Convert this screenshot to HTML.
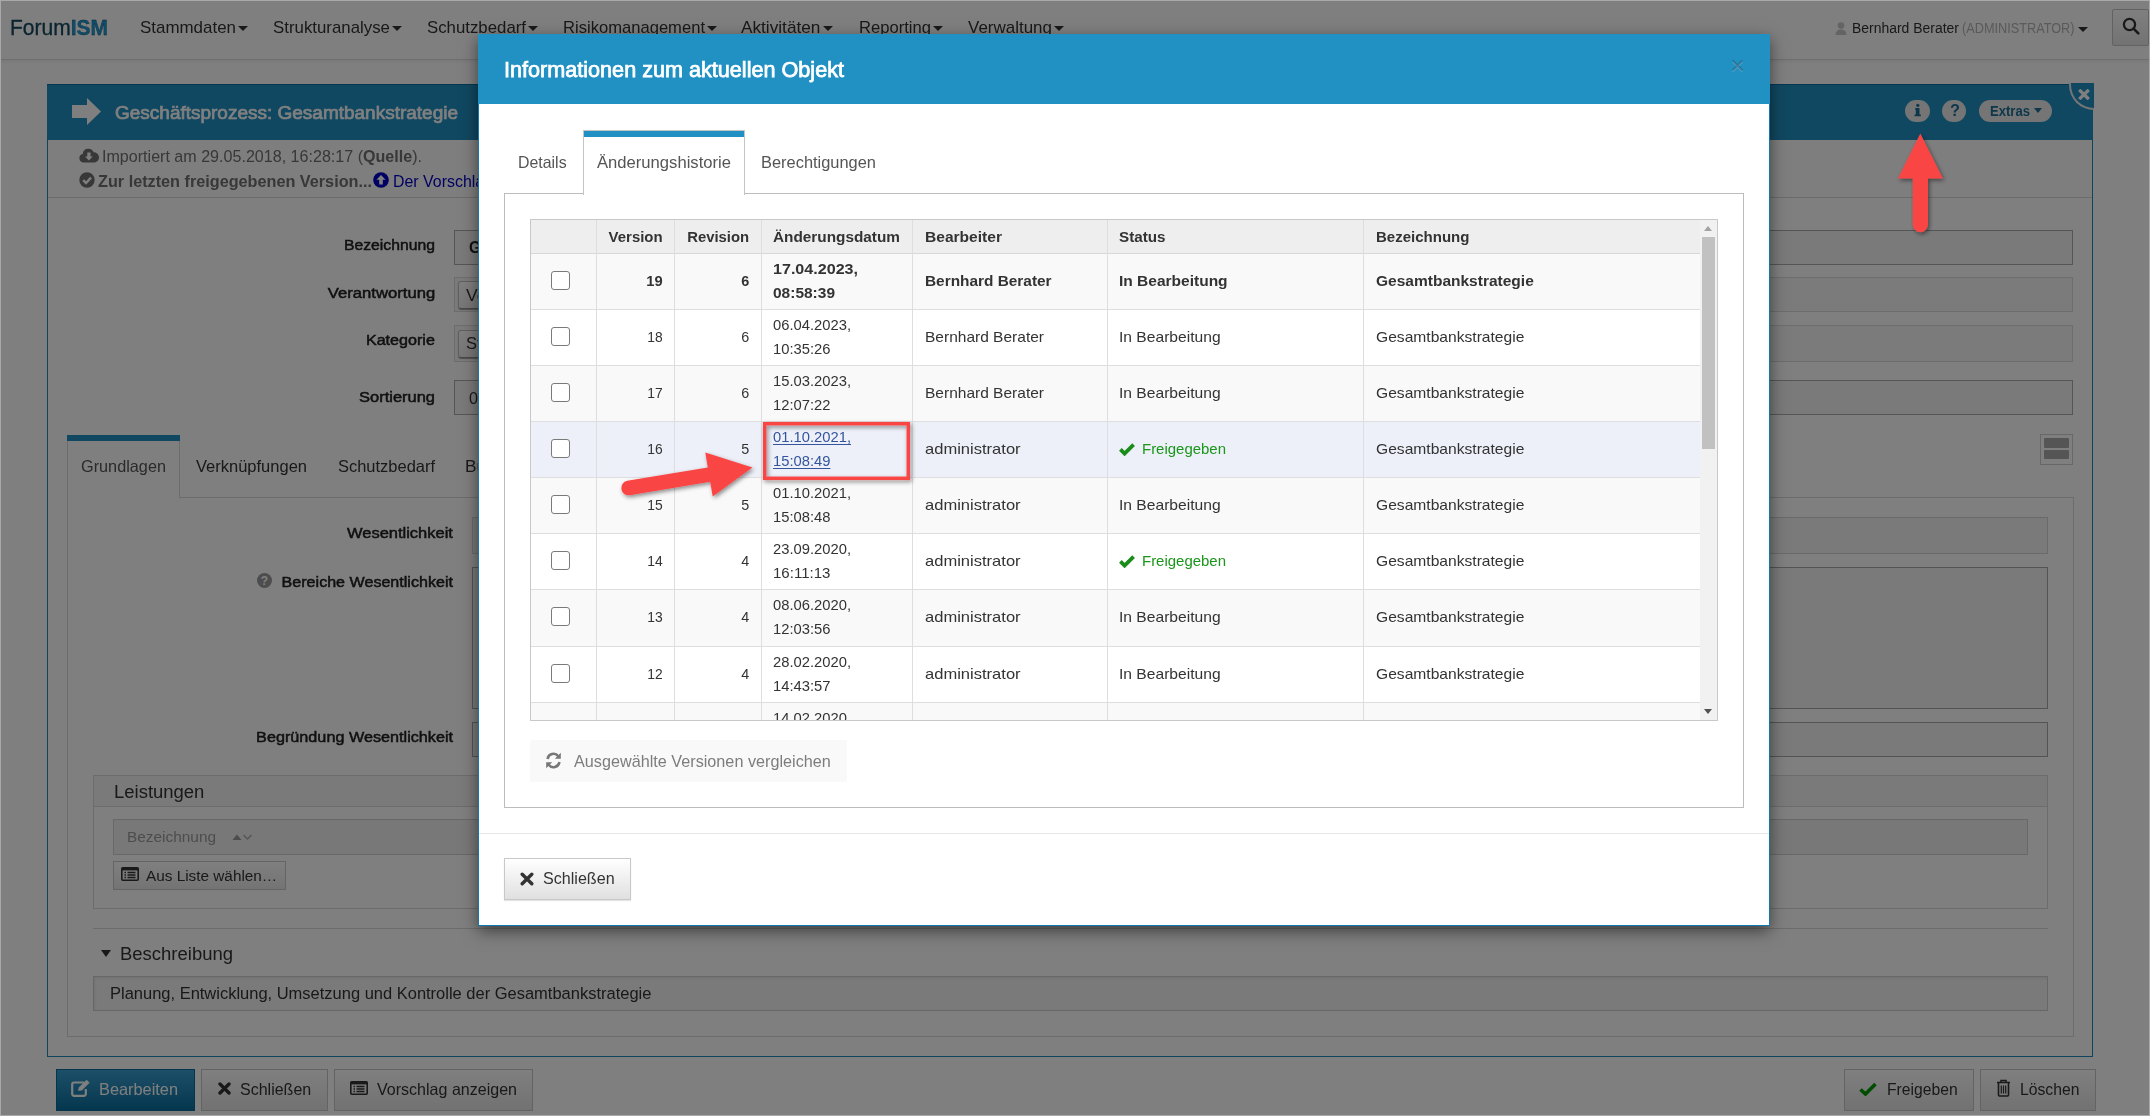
<!DOCTYPE html>
<html><head><meta charset="utf-8"><title>ForumISM - Informationen zum aktuellen Objekt</title><style>*{margin:0;padding:0}
html,body{width:2150px;height:1116px;overflow:hidden;background:#fff}
body{position:relative;font-family:"Liberation Sans",sans-serif}
.a{position:absolute}
.t{position:absolute;white-space:pre;display:block}
</style></head>
<body>
<div id="page"><div class="a" style="left:0px;top:0px;width:2150px;height:1116px;background:#fff"></div><div class="a" style="left:0px;top:0px;width:2150px;height:59px;background:#fff;border-bottom:1px solid #dcdcdc;box-shadow:0 1px 5px rgba(0,0,0,.08)"></div><span class="t" style="left:10.0px;top:18.0px;font-size:21.5px;line-height:21.5px;font-weight:400;color:#16475c;transform:scaleX(0.9765);transform-origin:left;-webkit-text-stroke:0.3px #16475c">Forum<b style="color:#1f9ad4">ISM</b></span><span class="t" style="left:139.5px;top:19.0px;font-size:17px;line-height:17px;font-weight:400;color:#333;transform:scaleX(0.9959);transform-origin:left;">Stammdaten</span><div class="a" style="left:238px;top:26px;width:0;height:0;border-left:5.0px solid transparent;border-right:5.0px solid transparent;border-top:5px solid #333"></div><span class="t" style="left:272.5px;top:19.0px;font-size:17px;line-height:17px;font-weight:400;color:#333;transform:scaleX(0.9905);transform-origin:left;">Strukturanalyse</span><div class="a" style="left:392px;top:26px;width:0;height:0;border-left:5.0px solid transparent;border-right:5.0px solid transparent;border-top:5px solid #333"></div><span class="t" style="left:426.5px;top:19.0px;font-size:17px;line-height:17px;font-weight:400;color:#333;transform:scaleX(0.9881);transform-origin:left;">Schutzbedarf</span><div class="a" style="left:528px;top:26px;width:0;height:0;border-left:5.0px solid transparent;border-right:5.0px solid transparent;border-top:5px solid #333"></div><span class="t" style="left:562.5px;top:19.0px;font-size:17px;line-height:17px;font-weight:400;color:#333;transform:scaleX(0.9758);transform-origin:left;">Risikomanagement</span><div class="a" style="left:707px;top:26px;width:0;height:0;border-left:5.0px solid transparent;border-right:5.0px solid transparent;border-top:5px solid #333"></div><span class="t" style="left:741.1px;top:19.0px;font-size:17px;line-height:17px;font-weight:400;color:#333;transform:scaleX(1.0123);transform-origin:left;">Aktivitäten</span><div class="a" style="left:823px;top:26px;width:0;height:0;border-left:5.0px solid transparent;border-right:5.0px solid transparent;border-top:5px solid #333"></div><span class="t" style="left:858.5px;top:19.0px;font-size:17px;line-height:17px;font-weight:400;color:#333;transform:scaleX(0.9767);transform-origin:left;">Reporting</span><div class="a" style="left:933px;top:26px;width:0;height:0;border-left:5.0px solid transparent;border-right:5.0px solid transparent;border-top:5px solid #333"></div><span class="t" style="left:967.5px;top:19.0px;font-size:17px;line-height:17px;font-weight:400;color:#333;transform:scaleX(0.9985);transform-origin:left;">Verwaltung</span><div class="a" style="left:1054px;top:26px;width:0;height:0;border-left:5.0px solid transparent;border-right:5.0px solid transparent;border-top:5px solid #333"></div><svg class="a" style="left:1835px;top:22px" width="12" height="13" viewBox="0 0 12 13"><circle cx="6" cy="3.6" r="3.3" fill="#c8c8c8"/><path d="M0.5 13 Q0.5 7.5 6 7.5 Q11.5 7.5 11.5 13 Z" fill="#c8c8c8"/></svg><span class="t" style="left:1851.5px;top:22.0px;font-size:13.8px;line-height:13.8px;font-weight:400;color:#333;transform:scaleX(1.0109);transform-origin:left;">Bernhard Berater</span><span class="t" style="left:1961.5px;top:22.0px;font-size:13.8px;line-height:13.8px;font-weight:400;color:#b4b4b4;transform:scaleX(0.9212);transform-origin:left;">(ADMINISTRATOR)</span><div class="a" style="left:2077.5px;top:27px;width:0;height:0;border-left:5.0px solid transparent;border-right:5.0px solid transparent;border-top:5px solid #333"></div><div class="a" style="left:2112px;top:9px;width:37px;height:37px;border:1px solid #c4c4c4;background:linear-gradient(#fff,#e6e6e6);box-sizing:border-box;border-radius:2px"></div><svg class="a" style="left:2122px;top:17px" width="18" height="18" viewBox="0 0 18 18"><circle cx="7.5" cy="7.5" r="5.6" fill="none" stroke="#333" stroke-width="2.3"/><path d="M11.6 11.6 L16.3 16.3" stroke="#333" stroke-width="2.6" stroke-linecap="round"/></svg><div class="a" style="left:47px;top:84px;width:2046px;height:973px;border:1px solid #1c88bb;box-sizing:border-box;background:#fff"></div><div class="a" style="left:47px;top:84px;width:2046px;height:56px;background:#2190c3;border-top:1px solid #0a6fa0;box-sizing:border-box"></div><svg class="a" style="left:72px;top:98px" width="30" height="27" viewBox="0 0 30 27"><path d="M0 7 H15 V0 L29 13.5 L15 27 V20 H0 Z" fill="#fff"/></svg><span class="t" style="left:115.0px;top:104.0px;font-size:18.6px;line-height:18.6px;font-weight:400;color:#fff;transform:scaleX(1.0212);transform-origin:left;-webkit-text-stroke:0.7px #fff">Geschäftsprozess: Gesamtbankstrategie</span><div class="a" style="left:1905px;top:100px;width:25px;height:22px;background:#eaeaea;border-radius:12px"></div><svg class="a" style="left:1913px;top:103px" width="10" height="15" viewBox="0 0 10 15"><circle cx="4.8" cy="2.3" r="1.6" fill="#1f6f96"/><path d="M2.2 5 H6.5 V11.4 H7.8 V13.2 H1.6 V11.4 H2.8 V6.8 H2.2 Z" fill="#1f6f96"/></svg><div class="a" style="left:1942px;top:100px;width:24px;height:22px;background:#eaeaea;border-radius:12px"></div><span class="t" style="left:1950.0px;top:103.0px;font-size:16px;line-height:16px;font-weight:700;color:#1f6f96;transform:scaleX(1.0224);transform-origin:left;">?</span><div class="a" style="left:1979px;top:100px;width:73px;height:22px;background:#eaeaea;border-radius:11px"></div><span class="t" style="left:1990.0px;top:104.0px;font-size:14.5px;line-height:14.5px;font-weight:700;color:#1f6f96;transform:scaleX(0.9020);transform-origin:left;">Extras</span><div class="a" style="left:2033.5px;top:108px;width:0;height:0;border-left:4.5px solid transparent;border-right:4.5px solid transparent;border-top:5px solid #1f6f96"></div><div class="a" style="left:2068.5px;top:83px;width:25.5px;height:27px;background:#2190c3;border-left:2px solid #eaeaea;border-bottom:2px solid #eaeaea;border-bottom-left-radius:26px;box-sizing:border-box"></div><svg class="a" style="left:2078px;top:89px" width="12" height="11" viewBox="0 0 12 11"><path d="M2.4 2 L9.6 9 M9.6 2 L2.4 9" stroke="#fff" stroke-width="3.3" stroke-linecap="square"/></svg><div class="a" style="left:48px;top:140px;width:2044px;height:58px;background:#fcfcfc;border-bottom:1px solid #d6d6d6;box-sizing:border-box"></div><svg class="a" style="left:79px;top:147px" width="20" height="16" viewBox="0 0 20 16"><path d="M4.5 15.5 A4.3 4.3 0 0 1 3.8 7 A5.6 5.6 0 0 1 14.6 5.2 A5.2 5.2 0 0 1 15.8 15.5 Z" fill="#707070"/><path d="M8.3 5.5 H11.5 V9.5 H13.8 L9.9 13.5 L6 9.5 H8.3 Z" fill="#fff"/></svg><span class="t" style="left:102.0px;top:148.5px;font-size:16.8px;line-height:16.8px;font-weight:400;color:#707070;transform:scaleX(0.9582);transform-origin:left;">Importiert am 29.05.2018, 16:28:17 (<b>Quelle</b>).</span><svg class="a" style="left:79px;top:172px" width="16" height="16" viewBox="0 0 16 16"><circle cx="8" cy="8" r="7.7" fill="#707070"/><path d="M4.2 8.2 L7 11 L12 5.6" fill="none" stroke="#fff" stroke-width="2.4"/></svg><span class="t" style="left:98.0px;top:174.0px;font-size:16.8px;line-height:16.8px;font-weight:700;color:#707070;transform:scaleX(0.9665);transform-origin:left;">Zur letzten freigegebenen Version...</span><svg class="a" style="left:373px;top:172px" width="16" height="16" viewBox="0 0 16 16"><circle cx="8" cy="8" r="7.8" fill="#0000c8"/><path d="M8 3 L12.6 7.8 H9.8 V12.5 H6.2 V7.8 H3.4 Z" fill="#fff"/></svg><span class="t" style="left:393.0px;top:174.0px;font-size:16.8px;line-height:16.8px;font-weight:400;color:#0000c8;transform:scaleX(0.9487);transform-origin:left;">Der Vorschlag</span><span class="t" style="left:346.0px;top:237.0px;font-size:15.4px;line-height:15.4px;font-weight:400;color:#222;transform:scaleX(1.0225);transform-origin:right;-webkit-text-stroke:0.5px #222">Bezeichnung</span><span class="t" style="left:335.8px;top:285.0px;font-size:15.4px;line-height:15.4px;font-weight:400;color:#222;transform:scaleX(1.0821);transform-origin:right;-webkit-text-stroke:0.5px #222">Verantwortung</span><span class="t" style="left:369.1px;top:332.0px;font-size:15.4px;line-height:15.4px;font-weight:400;color:#222;transform:scaleX(1.0472);transform-origin:right;-webkit-text-stroke:0.5px #222">Kategorie</span><span class="t" style="left:364.0px;top:389.0px;font-size:15.4px;line-height:15.4px;font-weight:400;color:#222;transform:scaleX(1.0702);transform-origin:right;-webkit-text-stroke:0.5px #222">Sortierung</span><div class="a" style="left:454px;top:230px;width:1619px;height:35px;background:#f5f5f5;border:1px solid #ababab;box-sizing:border-box"></div><span class="t" style="left:469.0px;top:239.0px;font-size:16.5px;line-height:16.5px;font-weight:700;color:#222;transform:scaleX(0.9343);transform-origin:left;">G</span><div class="a" style="left:454px;top:277px;width:1619px;height:35px;background:#f7f7f7;border:1px solid #dadada;box-sizing:border-box"></div><div class="a" style="left:458px;top:281px;width:242px;height:28px;background:linear-gradient(#fff,#eee);border:1px solid #c0c0c0;border-bottom-color:#909090;border-radius:3px;box-shadow:0 1px 1px rgba(0,0,0,.35);box-sizing:border-box"></div><span class="t" style="left:466.0px;top:287.0px;font-size:16.5px;line-height:16.5px;font-weight:400;color:#333;transform:scaleX(1.0614);transform-origin:left;">Verantwortlich</span><div class="a" style="left:454px;top:325px;width:1619px;height:37px;background:#f7f7f7;border:1px solid #dadada;box-sizing:border-box"></div><div class="a" style="left:458px;top:330px;width:242px;height:28px;background:linear-gradient(#fff,#eee);border:1px solid #c0c0c0;border-bottom-color:#909090;border-radius:3px;box-shadow:0 1px 1px rgba(0,0,0,.35);box-sizing:border-box"></div><span class="t" style="left:465.5px;top:335.0px;font-size:16.5px;line-height:16.5px;font-weight:400;color:#333;transform:scaleX(0.9993);transform-origin:left;">Strategie</span><div class="a" style="left:454px;top:380px;width:1619px;height:35px;background:#f5f5f5;border:1px solid #ababab;box-sizing:border-box"></div><span class="t" style="left:469.0px;top:390.0px;font-size:16.5px;line-height:16.5px;font-weight:400;color:#333;transform:scaleX(0.9796);transform-origin:left;">0</span><div class="a" style="left:2040px;top:434px;width:33px;height:31px;border:1px solid #d0d0d0;box-sizing:border-box;background:#fff"></div><div class="a" style="left:2044px;top:438px;width:25px;height:10px;background:#aaa;border-radius:1px"></div><div class="a" style="left:2044px;top:450px;width:25px;height:9px;background:#aaa;border-radius:1px"></div><div class="a" style="left:67px;top:497px;width:2007px;height:540px;border:1px solid #d8d8d8;box-sizing:border-box;background:#fff"></div><div class="a" style="left:67px;top:435px;width:113px;height:63px;background:#fff;border-left:1px solid #d8d8d8;border-right:1px solid #d8d8d8;box-sizing:border-box"></div><div class="a" style="left:67px;top:435px;width:113px;height:6px;background:#2190c3"></div><span class="t" style="left:81.0px;top:458.0px;font-size:16.5px;line-height:16.5px;font-weight:400;color:#555;transform:scaleX(0.9857);transform-origin:left;">Grundlagen</span><span class="t" style="left:196.0px;top:458.0px;font-size:16.5px;line-height:16.5px;font-weight:400;color:#333;transform:scaleX(0.9999);transform-origin:left;">Verknüpfungen</span><span class="t" style="left:338.0px;top:458.0px;font-size:16.5px;line-height:16.5px;font-weight:400;color:#333;transform:scaleX(0.9976);transform-origin:left;">Schutzbedarf</span><span class="t" style="left:465.0px;top:458.0px;font-size:16.5px;line-height:16.5px;font-weight:400;color:#333;transform:scaleX(1.0455);transform-origin:left;">Business</span><span class="t" style="left:354.0px;top:525.0px;font-size:15.4px;line-height:15.4px;font-weight:400;color:#222;transform:scaleX(1.0712);transform-origin:right;-webkit-text-stroke:0.5px #222">Wesentlichkeit</span><div class="a" style="left:472px;top:517px;width:1576px;height:37px;background:#f5f5f5;border:1px solid #d4d4d4;box-sizing:border-box"></div><svg class="a" style="left:257px;top:573px" width="15" height="15" viewBox="0 0 15 15"><circle cx="7.5" cy="7.5" r="7.5" fill="#9a9a9a"/><text x="7.5" y="12" text-anchor="middle" font-family="Liberation Sans" font-weight="bold" font-size="12" fill="#fff">?</text></svg><span class="t" style="left:289.0px;top:574.0px;font-size:15.4px;line-height:15.4px;font-weight:400;color:#222;transform:scaleX(1.0453);transform-origin:right;-webkit-text-stroke:0.5px #222">Bereiche Wesentlichkeit</span><div class="a" style="left:472px;top:567px;width:1576px;height:142px;background:#f5f5f5;border:1px solid #a8a8a8;box-sizing:border-box"></div><span class="t" style="left:265.9px;top:729.0px;font-size:15.4px;line-height:15.4px;font-weight:400;color:#222;transform:scaleX(1.0529);transform-origin:right;-webkit-text-stroke:0.5px #222">Begründung Wesentlichkeit</span><div class="a" style="left:472px;top:722px;width:1576px;height:35px;background:#f5f5f5;border:1px solid #a8a8a8;box-sizing:border-box"></div><div class="a" style="left:93px;top:775px;width:1955px;height:134px;border:1px solid #d8d8d8;box-sizing:border-box;background:#fff"></div><div class="a" style="left:94px;top:776px;width:1953px;height:31px;background:#f5f5f5;border-bottom:1px solid #d8d8d8;box-sizing:border-box"></div><span class="t" style="left:113.6px;top:783.0px;font-size:18.3px;line-height:18.3px;font-weight:400;color:#333;transform:scaleX(1.0106);transform-origin:left;">Leistungen</span><div class="a" style="left:113px;top:819px;width:1915px;height:36px;background:#f0f0f0;border:1px solid #d0d0d0;box-sizing:border-box"></div><span class="t" style="left:127.0px;top:828.8px;font-size:15.5px;line-height:15.5px;font-weight:400;color:#9a9a9a;transform:scaleX(0.9930);transform-origin:left;">Bezeichnung</span><svg class="a" style="left:232px;top:831.5px" width="21" height="9" viewBox="0 0 21 9"><path d="M0.5 8 L5 2.5 L9.5 8 Z" fill="#999"/><path d="M11.5 3 L15.5 7 L19.5 3" fill="none" stroke="#aaa" stroke-width="1.3"/></svg><div class="a" style="left:113px;top:861px;width:173px;height:29px;background:linear-gradient(#fff,#e8e8e8);border:1px solid #c8c8c8;box-sizing:border-box"></div><svg class="a" style="left:121px;top:867px" width="18" height="14" viewBox="0 0 18 14"><rect x="0.8" y="0.8" width="16.4" height="12.4" rx="1" fill="none" stroke="#333" stroke-width="1.6"/><rect x="0.8" y="0.8" width="16.4" height="2.6" fill="#333"/><path d="M3.5 5.5 H5 M3.5 8 H5 M3.5 10.5 H5 M6.5 5.5 H14.5 M6.5 8 H14.5 M6.5 10.5 H14.5" stroke="#333" stroke-width="1.3"/></svg><span class="t" style="left:146.4px;top:868.0px;font-size:15.5px;line-height:15.5px;font-weight:400;color:#333;transform:scaleX(0.9888);transform-origin:left;">Aus Liste wählen…</span><div class="a" style="left:93px;top:928px;width:1955px;height:1px;background:#d8d8d8"></div><div class="a" style="left:100.5px;top:950px;width:0;height:0;border-left:5.75px solid transparent;border-right:5.75px solid transparent;border-top:7.4px solid #333"></div><span class="t" style="left:120.0px;top:945.0px;font-size:18.3px;line-height:18.3px;font-weight:400;color:#333;transform:scaleX(1.0108);transform-origin:left;">Beschreibung</span><div class="a" style="left:93px;top:976px;width:1955px;height:35px;background:#f5f5f5;border:1px solid #cfcfcf;box-sizing:border-box;box-shadow:inset 1px 1px 3px rgba(0,0,0,.08)"></div><span class="t" style="left:109.6px;top:986.0px;font-size:16.8px;line-height:16.8px;font-weight:400;color:#333;transform:scaleX(0.9820);transform-origin:left;">Planung, Entwicklung, Umsetzung und Kontrolle der Gesamtbankstrategie</span><div class="a" style="left:56px;top:1069px;width:139px;height:42px;background:linear-gradient(#3aa0d0,#0a6d9e);border:1px solid #0b6a98;box-sizing:border-box"></div><svg class="a" style="left:71px;top:1079px" width="20" height="18" viewBox="0 0 20 18"><path d="M13 3.5 H3 A1.8 1.8 0 0 0 1.2 5.3 V15 A1.8 1.8 0 0 0 3 16.8 H13 A1.8 1.8 0 0 0 14.8 15 V10" fill="none" stroke="#fff" stroke-width="2.2"/><path d="M7 11.8 L7.8 8.6 L15.6 0.8 L18.6 3.8 L10.8 11.6 Z" fill="#fff"/></svg><span class="t" style="left:99.0px;top:1081.0px;font-size:16.5px;line-height:16.5px;font-weight:400;color:#fff;transform:scaleX(0.9898);transform-origin:left;">Bearbeiten</span><div class="a" style="left:201px;top:1069px;width:127px;height:42px;background:linear-gradient(#fff,#e4e4e4);border:1px solid #c6c6c6;box-sizing:border-box"></div><span class="t" style="left:240.4px;top:1081.0px;font-size:16.5px;line-height:16.5px;font-weight:400;color:#333;transform:scaleX(0.9704);transform-origin:left;">Schließen</span><div class="a" style="left:334px;top:1069px;width:199px;height:42px;background:linear-gradient(#fff,#e4e4e4);border:1px solid #c6c6c6;box-sizing:border-box"></div><span class="t" style="left:377.0px;top:1081.0px;font-size:16.5px;line-height:16.5px;font-weight:400;color:#333;transform:scaleX(0.9720);transform-origin:left;">Vorschlag anzeigen</span><div class="a" style="left:1843.5px;top:1069px;width:130.5px;height:42px;background:linear-gradient(#fff,#e4e4e4);border:1px solid #c6c6c6;box-sizing:border-box"></div><span class="t" style="left:1887.0px;top:1081.0px;font-size:16.5px;line-height:16.5px;font-weight:400;color:#333;transform:scaleX(0.9514);transform-origin:left;">Freigeben</span><div class="a" style="left:1980px;top:1069px;width:116px;height:42px;background:linear-gradient(#fff,#e4e4e4);border:1px solid #c6c6c6;box-sizing:border-box"></div><span class="t" style="left:2020.0px;top:1081.0px;font-size:16.5px;line-height:16.5px;font-weight:400;color:#333;transform:scaleX(0.9537);transform-origin:left;">Löschen</span><svg class="a" style="left:218px;top:1082px" width="13" height="13" viewBox="0 0 13 13"><path d="M2 2 L11 11 M11 2 L2 11" stroke="#333" stroke-width="3.4" stroke-linecap="round"/></svg><svg class="a" style="left:350px;top:1081px" width="18" height="14" viewBox="0 0 18 14"><rect x="0.8" y="0.8" width="16.4" height="12.4" rx="1" fill="none" stroke="#333" stroke-width="1.6"/><rect x="0.8" y="0.8" width="16.4" height="2.6" fill="#333"/><path d="M3.5 5.5 H5 M3.5 8 H5 M3.5 10.5 H5 M6.5 5.5 H14.5 M6.5 8 H14.5 M6.5 10.5 H14.5" stroke="#333" stroke-width="1.3"/></svg><svg class="a" style="left:1859px;top:1082px" width="18" height="14" viewBox="0 0 18 14"><path d="M1.5 7.5 L6.5 12 L16.5 2" fill="none" stroke="#090" stroke-width="3.6"/></svg><svg class="a" style="left:1996px;top:1079px" width="15" height="18" viewBox="0 0 15 18"><path d="M1 3.5 H14 M5 3.5 V1.5 H10 V3.5" fill="none" stroke="#333" stroke-width="1.5"/><path d="M2.5 4 V16 A1 1 0 0 0 3.5 17 H11.5 A1 1 0 0 0 12.5 16 V4" fill="none" stroke="#333" stroke-width="1.6"/><path d="M5.3 6.5 V14.5 M7.5 6.5 V14.5 M9.7 6.5 V14.5" stroke="#333" stroke-width="1.2"/></svg></div>
<div class="a" style="left:0;top:0;width:2150px;height:1116px;background:rgba(0,0,0,.5)"></div>
<div id="modal"><div class="a" style="left:478px;top:34px;width:1292px;height:892px;background:#fff;border:1px solid #1277ad;box-sizing:border-box;box-shadow:0 5px 15px rgba(0,0,0,.5)"></div><div class="a" style="left:478px;top:34px;width:1292px;height:70px;background:#2190c3"></div><span class="t" style="left:504.4px;top:59.8px;font-size:21.4px;line-height:21.4px;font-weight:400;color:#fff;transform:scaleX(1.0104);transform-origin:left;-webkit-text-stroke:0.75px #fff">Informationen zum aktuellen Objekt</span><svg class="a" style="left:1731px;top:59px" width="13" height="14" viewBox="0 0 13 14"><path d="M1.5 2.5 L11.5 12.5 M11.5 2.5 L1.5 12.5" stroke="#fff" stroke-opacity="0.2" stroke-width="2"/><path d="M1.5 1.5 L11.5 11.5 M11.5 1.5 L1.5 11.5" stroke="#000" stroke-opacity="0.22" stroke-width="2"/></svg><div class="a" style="left:504px;top:193px;width:1240px;height:615px;border:1px solid #bcbcbc;box-sizing:border-box"></div><div class="a" style="left:583px;top:130px;width:162px;height:65px;background:#fff;border:1px solid #c4c4c4;border-bottom:none;box-sizing:border-box"></div><div class="a" style="left:584px;top:131px;width:160px;height:6px;background:#2190c3"></div><span class="t" style="left:518.4px;top:154.0px;font-size:16.5px;line-height:16.5px;font-weight:400;color:#555;transform:scaleX(0.9636);transform-origin:left;">Details</span><span class="t" style="left:597.0px;top:154.0px;font-size:16.5px;line-height:16.5px;font-weight:400;color:#555;transform:scaleX(1.0075);transform-origin:left;">Änderungshistorie</span><span class="t" style="left:761.0px;top:154.0px;font-size:16.5px;line-height:16.5px;font-weight:400;color:#555;transform:scaleX(0.9949);transform-origin:left;">Berechtigungen</span><div class="a" style="left:530px;top:219px;width:1188px;height:502px;border:1px solid #c8c8c8;box-sizing:border-box;overflow:hidden"><div class="a" style="left:0px;top:0px;width:1169px;height:34px;background:#eee;border-bottom:1px solid #d8d8d8;box-sizing:border-box"></div><div class="a" style="left:0px;top:34px;width:1169px;height:56px;background:#f9f9f9;border-bottom:1px solid #dedede;box-sizing:border-box"></div><div class="a" style="left:0px;top:90px;width:1169px;height:56px;background:#fff;border-bottom:1px solid #dedede;box-sizing:border-box"></div><div class="a" style="left:0px;top:146px;width:1169px;height:56px;background:#f9f9f9;border-bottom:1px solid #dedede;box-sizing:border-box"></div><div class="a" style="left:0px;top:202px;width:1169px;height:56px;background:#edf0f9;border-bottom:1px solid #dedede;box-sizing:border-box"></div><div class="a" style="left:0px;top:258px;width:1169px;height:56px;background:#f9f9f9;border-bottom:1px solid #dedede;box-sizing:border-box"></div><div class="a" style="left:0px;top:314px;width:1169px;height:56px;background:#fff;border-bottom:1px solid #dedede;box-sizing:border-box"></div><div class="a" style="left:0px;top:370px;width:1169px;height:57px;background:#f9f9f9;border-bottom:1px solid #dedede;box-sizing:border-box"></div><div class="a" style="left:0px;top:427px;width:1169px;height:56px;background:#fff;border-bottom:1px solid #dedede;box-sizing:border-box"></div><div class="a" style="left:0px;top:483px;width:1169px;height:56px;background:#f9f9f9;border-bottom:1px solid #dedede;box-sizing:border-box"></div><div class="a" style="left:65.0px;top:0px;width:1.0px;height:501px;background:#dedede"></div><div class="a" style="left:143.0px;top:0px;width:1.0px;height:501px;background:#dedede"></div><div class="a" style="left:230.0px;top:0px;width:1.0px;height:501px;background:#dedede"></div><div class="a" style="left:381.0px;top:0px;width:1.0px;height:501px;background:#dedede"></div><div class="a" style="left:576.0px;top:0px;width:1.0px;height:501px;background:#dedede"></div><div class="a" style="left:832.0px;top:0px;width:1.0px;height:501px;background:#dedede"></div><div class="a" style="left:1169px;top:0px;width:17px;height:500px;background:#f1f1f1"></div><div class="a" style="left:1171px;top:17px;width:13px;height:212px;background:#c1c1c1"></div><div class="a" style="left:1173px;top:6px;width:0;height:0;border-left:4.5px solid transparent;border-right:4.5px solid transparent;border-bottom:5px solid #a3a3a3"></div><div class="a" style="left:1173px;top:489px;width:0;height:0;border-left:4.5px solid transparent;border-right:4.5px solid transparent;border-top:5px solid #505050"></div><span class="t" style="left:75.8px;top:9.4px;font-size:15.4px;line-height:15.4px;font-weight:700;color:#333;transform:scaleX(0.9711);transform-origin:right;">Version</span><span class="t" style="left:153.8px;top:9.4px;font-size:15.4px;line-height:15.4px;font-weight:700;color:#333;transform:scaleX(0.9664);transform-origin:right;">Revision</span><span class="t" style="left:242.0px;top:9.4px;font-size:15.4px;line-height:15.4px;font-weight:700;color:#333;transform:scaleX(0.9968);transform-origin:left;">Änderungsdatum</span><span class="t" style="left:394.0px;top:9.4px;font-size:15.4px;line-height:15.4px;font-weight:700;color:#333;transform:scaleX(1.0113);transform-origin:left;">Bearbeiter</span><span class="t" style="left:588.4px;top:9.4px;font-size:15.4px;line-height:15.4px;font-weight:700;color:#333;transform:scaleX(0.9905);transform-origin:left;">Status</span><span class="t" style="left:844.6px;top:9.4px;font-size:15.4px;line-height:15.4px;font-weight:700;color:#333;transform:scaleX(0.9751);transform-origin:left;">Bezeichnung</span><div class="a" style="left:20px;top:51.0px;width:18.600000000000023px;height:18.600000000000023px;border:1.3px solid #7a7a7a;border-radius:3px;background:#fff;box-sizing:border-box"></div><span class="t" style="left:114.7px;top:53.2px;font-size:15px;line-height:15px;font-weight:700;color:#333;transform:scaleX(0.9828);transform-origin:right;">19</span><span class="t" style="left:209.7px;top:53.2px;font-size:15px;line-height:15px;font-weight:700;color:#333;transform:scaleX(0.9588);transform-origin:right;">6</span><span class="t" style="left:242.0px;top:41.0px;font-size:15px;line-height:15px;font-weight:700;color:#333;transform:scaleX(1.0726);transform-origin:left;">17.04.2023,</span><span class="t" style="left:242.0px;top:64.6px;font-size:15px;line-height:15px;font-weight:700;color:#333;transform:scaleX(1.0325);transform-origin:left;">08:58:39</span><span class="t" style="left:394.0px;top:53.2px;font-size:15px;line-height:15px;font-weight:700;color:#333;transform:scaleX(1.0260);transform-origin:left;">Bernhard Berater</span><span class="t" style="left:588.4px;top:53.2px;font-size:15px;line-height:15px;font-weight:700;color:#333;transform:scaleX(1.0341);transform-origin:left;">In Bearbeitung</span><span class="t" style="left:844.6px;top:53.2px;font-size:15px;line-height:15px;font-weight:700;color:#333;transform:scaleX(1.0342);transform-origin:left;">Gesamtbankstrategie</span><div class="a" style="left:20px;top:107.0px;width:18.600000000000023px;height:18.600000000000023px;border:1.3px solid #7a7a7a;border-radius:3px;background:#fff;box-sizing:border-box"></div><span class="t" style="left:114.7px;top:109.2px;font-size:15px;line-height:15px;font-weight:400;color:#333;transform:scaleX(0.9228);transform-origin:right;">18</span><span class="t" style="left:209.7px;top:109.2px;font-size:15px;line-height:15px;font-weight:400;color:#333;transform:scaleX(0.9588);transform-origin:right;">6</span><span class="t" style="left:242.0px;top:97.0px;font-size:15px;line-height:15px;font-weight:400;color:#333;transform:scaleX(0.9842);transform-origin:left;">06.04.2023,</span><span class="t" style="left:242.0px;top:120.6px;font-size:15px;line-height:15px;font-weight:400;color:#333;transform:scaleX(0.9830);transform-origin:left;">10:35:26</span><span class="t" style="left:394.0px;top:109.2px;font-size:15px;line-height:15px;font-weight:400;color:#333;transform:scaleX(1.0341);transform-origin:left;">Bernhard Berater</span><span class="t" style="left:588.4px;top:109.2px;font-size:15px;line-height:15px;font-weight:400;color:#333;transform:scaleX(1.0412);transform-origin:left;">In Bearbeitung</span><span class="t" style="left:844.6px;top:109.2px;font-size:15px;line-height:15px;font-weight:400;color:#333;transform:scaleX(1.0408);transform-origin:left;">Gesamtbankstrategie</span><div class="a" style="left:20px;top:163.0px;width:18.600000000000023px;height:18.600000000000023px;border:1.3px solid #7a7a7a;border-radius:3px;background:#fff;box-sizing:border-box"></div><span class="t" style="left:114.7px;top:165.2px;font-size:15px;line-height:15px;font-weight:400;color:#333;transform:scaleX(0.9228);transform-origin:right;">17</span><span class="t" style="left:209.7px;top:165.2px;font-size:15px;line-height:15px;font-weight:400;color:#333;transform:scaleX(0.9588);transform-origin:right;">6</span><span class="t" style="left:242.0px;top:153.0px;font-size:15px;line-height:15px;font-weight:400;color:#333;transform:scaleX(0.9842);transform-origin:left;">15.03.2023,</span><span class="t" style="left:242.0px;top:176.6px;font-size:15px;line-height:15px;font-weight:400;color:#333;transform:scaleX(0.9830);transform-origin:left;">12:07:22</span><span class="t" style="left:394.0px;top:165.2px;font-size:15px;line-height:15px;font-weight:400;color:#333;transform:scaleX(1.0341);transform-origin:left;">Bernhard Berater</span><span class="t" style="left:588.4px;top:165.2px;font-size:15px;line-height:15px;font-weight:400;color:#333;transform:scaleX(1.0412);transform-origin:left;">In Bearbeitung</span><span class="t" style="left:844.6px;top:165.2px;font-size:15px;line-height:15px;font-weight:400;color:#333;transform:scaleX(1.0408);transform-origin:left;">Gesamtbankstrategie</span><div class="a" style="left:20px;top:219.0px;width:18.600000000000023px;height:18.600000000000023px;border:1.3px solid #7a7a7a;border-radius:3px;background:#fff;box-sizing:border-box"></div><span class="t" style="left:114.7px;top:221.2px;font-size:15px;line-height:15px;font-weight:400;color:#333;transform:scaleX(0.9228);transform-origin:right;">16</span><span class="t" style="left:209.7px;top:221.2px;font-size:15px;line-height:15px;font-weight:400;color:#333;transform:scaleX(0.9588);transform-origin:right;">5</span><span class="t" style="left:242.0px;top:209.0px;font-size:15px;line-height:15px;font-weight:400;color:#34559d;transform:scaleX(0.9842);transform-origin:left;text-decoration:underline;text-decoration-thickness:1px;text-underline-offset:2px">01.10.2021,</span><span class="t" style="left:242.0px;top:232.6px;font-size:15px;line-height:15px;font-weight:400;color:#34559d;transform:scaleX(0.9830);transform-origin:left;text-decoration:underline;text-decoration-thickness:1px;text-underline-offset:2px">15:08:49</span><span class="t" style="left:394.0px;top:221.2px;font-size:15px;line-height:15px;font-weight:400;color:#333;transform:scaleX(1.1026);transform-origin:left;">administrator</span><svg class="a" style="left:588px;top:223.10000000000002px" width="16" height="13" viewBox="0 0 16 13"><path d="M1.4 6.4 L5.6 10.6 L14.6 1.6" fill="none" stroke="#1a8c1a" stroke-width="3.8"/></svg><span class="t" style="left:611.4px;top:221.2px;font-size:15px;line-height:15px;font-weight:400;color:#1a961a;transform:scaleX(0.9972);transform-origin:left;">Freigegeben</span><span class="t" style="left:844.6px;top:221.2px;font-size:15px;line-height:15px;font-weight:400;color:#333;transform:scaleX(1.0408);transform-origin:left;">Gesamtbankstrategie</span><div class="a" style="left:20px;top:275.0px;width:18.600000000000023px;height:18.600000000000023px;border:1.3px solid #7a7a7a;border-radius:3px;background:#fff;box-sizing:border-box"></div><span class="t" style="left:114.7px;top:277.2px;font-size:15px;line-height:15px;font-weight:400;color:#333;transform:scaleX(0.9228);transform-origin:right;">15</span><span class="t" style="left:209.7px;top:277.2px;font-size:15px;line-height:15px;font-weight:400;color:#333;transform:scaleX(0.9588);transform-origin:right;">5</span><span class="t" style="left:242.0px;top:265.0px;font-size:15px;line-height:15px;font-weight:400;color:#333;transform:scaleX(0.9842);transform-origin:left;">01.10.2021,</span><span class="t" style="left:242.0px;top:288.6px;font-size:15px;line-height:15px;font-weight:400;color:#333;transform:scaleX(0.9830);transform-origin:left;">15:08:48</span><span class="t" style="left:394.0px;top:277.2px;font-size:15px;line-height:15px;font-weight:400;color:#333;transform:scaleX(1.1026);transform-origin:left;">administrator</span><span class="t" style="left:588.4px;top:277.2px;font-size:15px;line-height:15px;font-weight:400;color:#333;transform:scaleX(1.0412);transform-origin:left;">In Bearbeitung</span><span class="t" style="left:844.6px;top:277.2px;font-size:15px;line-height:15px;font-weight:400;color:#333;transform:scaleX(1.0408);transform-origin:left;">Gesamtbankstrategie</span><div class="a" style="left:20px;top:331.0px;width:18.600000000000023px;height:18.600000000000023px;border:1.3px solid #7a7a7a;border-radius:3px;background:#fff;box-sizing:border-box"></div><span class="t" style="left:114.7px;top:333.2px;font-size:15px;line-height:15px;font-weight:400;color:#333;transform:scaleX(0.9228);transform-origin:right;">14</span><span class="t" style="left:209.7px;top:333.2px;font-size:15px;line-height:15px;font-weight:400;color:#333;transform:scaleX(0.9588);transform-origin:right;">4</span><span class="t" style="left:242.0px;top:321.0px;font-size:15px;line-height:15px;font-weight:400;color:#333;transform:scaleX(0.9842);transform-origin:left;">23.09.2020,</span><span class="t" style="left:242.0px;top:344.6px;font-size:15px;line-height:15px;font-weight:400;color:#333;transform:scaleX(1.0021);transform-origin:left;">16:11:13</span><span class="t" style="left:394.0px;top:333.2px;font-size:15px;line-height:15px;font-weight:400;color:#333;transform:scaleX(1.1026);transform-origin:left;">administrator</span><svg class="a" style="left:588px;top:335.1px" width="16" height="13" viewBox="0 0 16 13"><path d="M1.4 6.4 L5.6 10.6 L14.6 1.6" fill="none" stroke="#1a8c1a" stroke-width="3.8"/></svg><span class="t" style="left:611.4px;top:333.2px;font-size:15px;line-height:15px;font-weight:400;color:#1a961a;transform:scaleX(0.9972);transform-origin:left;">Freigegeben</span><span class="t" style="left:844.6px;top:333.2px;font-size:15px;line-height:15px;font-weight:400;color:#333;transform:scaleX(1.0408);transform-origin:left;">Gesamtbankstrategie</span><div class="a" style="left:20px;top:387.0px;width:18.600000000000023px;height:18.600000000000023px;border:1.3px solid #7a7a7a;border-radius:3px;background:#fff;box-sizing:border-box"></div><span class="t" style="left:114.7px;top:389.2px;font-size:15px;line-height:15px;font-weight:400;color:#333;transform:scaleX(0.9228);transform-origin:right;">13</span><span class="t" style="left:209.7px;top:389.2px;font-size:15px;line-height:15px;font-weight:400;color:#333;transform:scaleX(0.9588);transform-origin:right;">4</span><span class="t" style="left:242.0px;top:377.0px;font-size:15px;line-height:15px;font-weight:400;color:#333;transform:scaleX(0.9842);transform-origin:left;">08.06.2020,</span><span class="t" style="left:242.0px;top:400.6px;font-size:15px;line-height:15px;font-weight:400;color:#333;transform:scaleX(0.9830);transform-origin:left;">12:03:56</span><span class="t" style="left:394.0px;top:389.2px;font-size:15px;line-height:15px;font-weight:400;color:#333;transform:scaleX(1.1026);transform-origin:left;">administrator</span><span class="t" style="left:588.4px;top:389.2px;font-size:15px;line-height:15px;font-weight:400;color:#333;transform:scaleX(1.0412);transform-origin:left;">In Bearbeitung</span><span class="t" style="left:844.6px;top:389.2px;font-size:15px;line-height:15px;font-weight:400;color:#333;transform:scaleX(1.0408);transform-origin:left;">Gesamtbankstrategie</span><div class="a" style="left:20px;top:444.0px;width:18.600000000000023px;height:18.600000000000023px;border:1.3px solid #7a7a7a;border-radius:3px;background:#fff;box-sizing:border-box"></div><span class="t" style="left:114.7px;top:446.2px;font-size:15px;line-height:15px;font-weight:400;color:#333;transform:scaleX(0.9228);transform-origin:right;">12</span><span class="t" style="left:209.7px;top:446.2px;font-size:15px;line-height:15px;font-weight:400;color:#333;transform:scaleX(0.9588);transform-origin:right;">4</span><span class="t" style="left:242.0px;top:434.0px;font-size:15px;line-height:15px;font-weight:400;color:#333;transform:scaleX(0.9842);transform-origin:left;">28.02.2020,</span><span class="t" style="left:242.0px;top:457.6px;font-size:15px;line-height:15px;font-weight:400;color:#333;transform:scaleX(0.9830);transform-origin:left;">14:43:57</span><span class="t" style="left:394.0px;top:446.2px;font-size:15px;line-height:15px;font-weight:400;color:#333;transform:scaleX(1.1026);transform-origin:left;">administrator</span><span class="t" style="left:588.4px;top:446.2px;font-size:15px;line-height:15px;font-weight:400;color:#333;transform:scaleX(1.0412);transform-origin:left;">In Bearbeitung</span><span class="t" style="left:844.6px;top:446.2px;font-size:15px;line-height:15px;font-weight:400;color:#333;transform:scaleX(1.0408);transform-origin:left;">Gesamtbankstrategie</span><div class="a" style="left:20px;top:500.0px;width:18.600000000000023px;height:18.600000000000023px;border:1.3px solid #7a7a7a;border-radius:3px;background:#fff;box-sizing:border-box"></div><span class="t" style="left:115.8px;top:502.2px;font-size:15px;line-height:15px;font-weight:400;color:#333;transform:scaleX(0.9886);transform-origin:right;">11</span><span class="t" style="left:209.7px;top:502.2px;font-size:15px;line-height:15px;font-weight:400;color:#333;transform:scaleX(0.9588);transform-origin:right;">4</span><span class="t" style="left:242.0px;top:490.0px;font-size:15px;line-height:15px;font-weight:400;color:#333;transform:scaleX(0.9842);transform-origin:left;">14.02.2020,</span><span class="t" style="left:242.0px;top:513.6px;font-size:15px;line-height:15px;font-weight:400;color:#333;transform:scaleX(0.9830);transform-origin:left;">09:12:01</span><span class="t" style="left:394.0px;top:502.2px;font-size:15px;line-height:15px;font-weight:400;color:#333;transform:scaleX(1.1026);transform-origin:left;">administrator</span><span class="t" style="left:588.4px;top:502.2px;font-size:15px;line-height:15px;font-weight:400;color:#333;transform:scaleX(1.0412);transform-origin:left;">In Bearbeitung</span><span class="t" style="left:844.6px;top:502.2px;font-size:15px;line-height:15px;font-weight:400;color:#333;transform:scaleX(1.0408);transform-origin:left;">Gesamtbankstrategie</span></div><div class="a" style="left:530px;top:740px;width:317px;height:42px;background:#f9f9f9;border-radius:2px"></div><svg class="a" style="left:545px;top:752px" width="17" height="17" viewBox="0 0 17 17"><path d="M2.6 7 A6 6 0 0 1 13.3 4.2" fill="none" stroke="#777" stroke-width="2.6"/><path d="M15.8 0.8 V6.8 H9.8 Z" fill="#777"/><path d="M14.4 10 A6 6 0 0 1 3.7 12.8" fill="none" stroke="#777" stroke-width="2.6"/><path d="M1.2 16.2 V10.2 H7.2 Z" fill="#777"/></svg><span class="t" style="left:573.6px;top:754.0px;font-size:16.6px;line-height:16.6px;font-weight:400;color:#7d7d7d;transform:scaleX(0.9767);transform-origin:left;">Ausgewählte Versionen vergleichen</span><div class="a" style="left:479px;top:833px;width:1290px;height:1px;background:#e5e5e5"></div><div class="a" style="left:504px;top:858px;width:127px;height:42px;background:linear-gradient(#fff,#e0e0e0);border:1px solid #c8c8c8;box-sizing:border-box;box-shadow:0 1px 1px rgba(0,0,0,.1)"></div><svg class="a" style="left:520px;top:872px" width="14" height="14" viewBox="0 0 14 14"><path d="M2.2 2.2 L11.8 11.8 M11.8 2.2 L2.2 11.8" stroke="#333" stroke-width="3.4" stroke-linecap="round"/></svg><span class="t" style="left:543.0px;top:870.4px;font-size:16.4px;line-height:16.4px;font-weight:400;color:#333;transform:scaleX(0.9823);transform-origin:left;">Schließen</span></div>
<svg class="a" style="left:0;top:0" width="2150" height="1116" viewBox="0 0 2150 1116">
<defs><filter id="sh" x="-20%" y="-20%" width="140%" height="140%"><feDropShadow dx="1.5" dy="2" stdDeviation="2" flood-color="#000" flood-opacity="0.45"/></filter></defs>
<g fill="#fa4545" filter="url(#sh)">
<path d="M1920.3 133.6 L1942.9 178.4 L1928 178.4 L1928 224.6 A7.6 7.6 0 0 1 1912.8 224.6 L1912.8 178.4 L1898 178.4 Z"/>
<path d="M752.4 467.4 L712.7 496.6 L710.2 481.8 L629.7 495.2 A7.3 7.3 0 0 1 627.3 480.8 L707.8 467.4 L705.3 452.6 Z"/>
</g>
<rect x="764.7" y="423.7" width="143.6" height="54.6" fill="none" stroke="#fa4545" stroke-width="3.5" filter="url(#sh)"/>
</svg>
<div class="a" style="left:0;top:0;width:2150px;height:1116px;border:1px solid #a9a9a9;box-sizing:border-box"></div>
</body></html>
